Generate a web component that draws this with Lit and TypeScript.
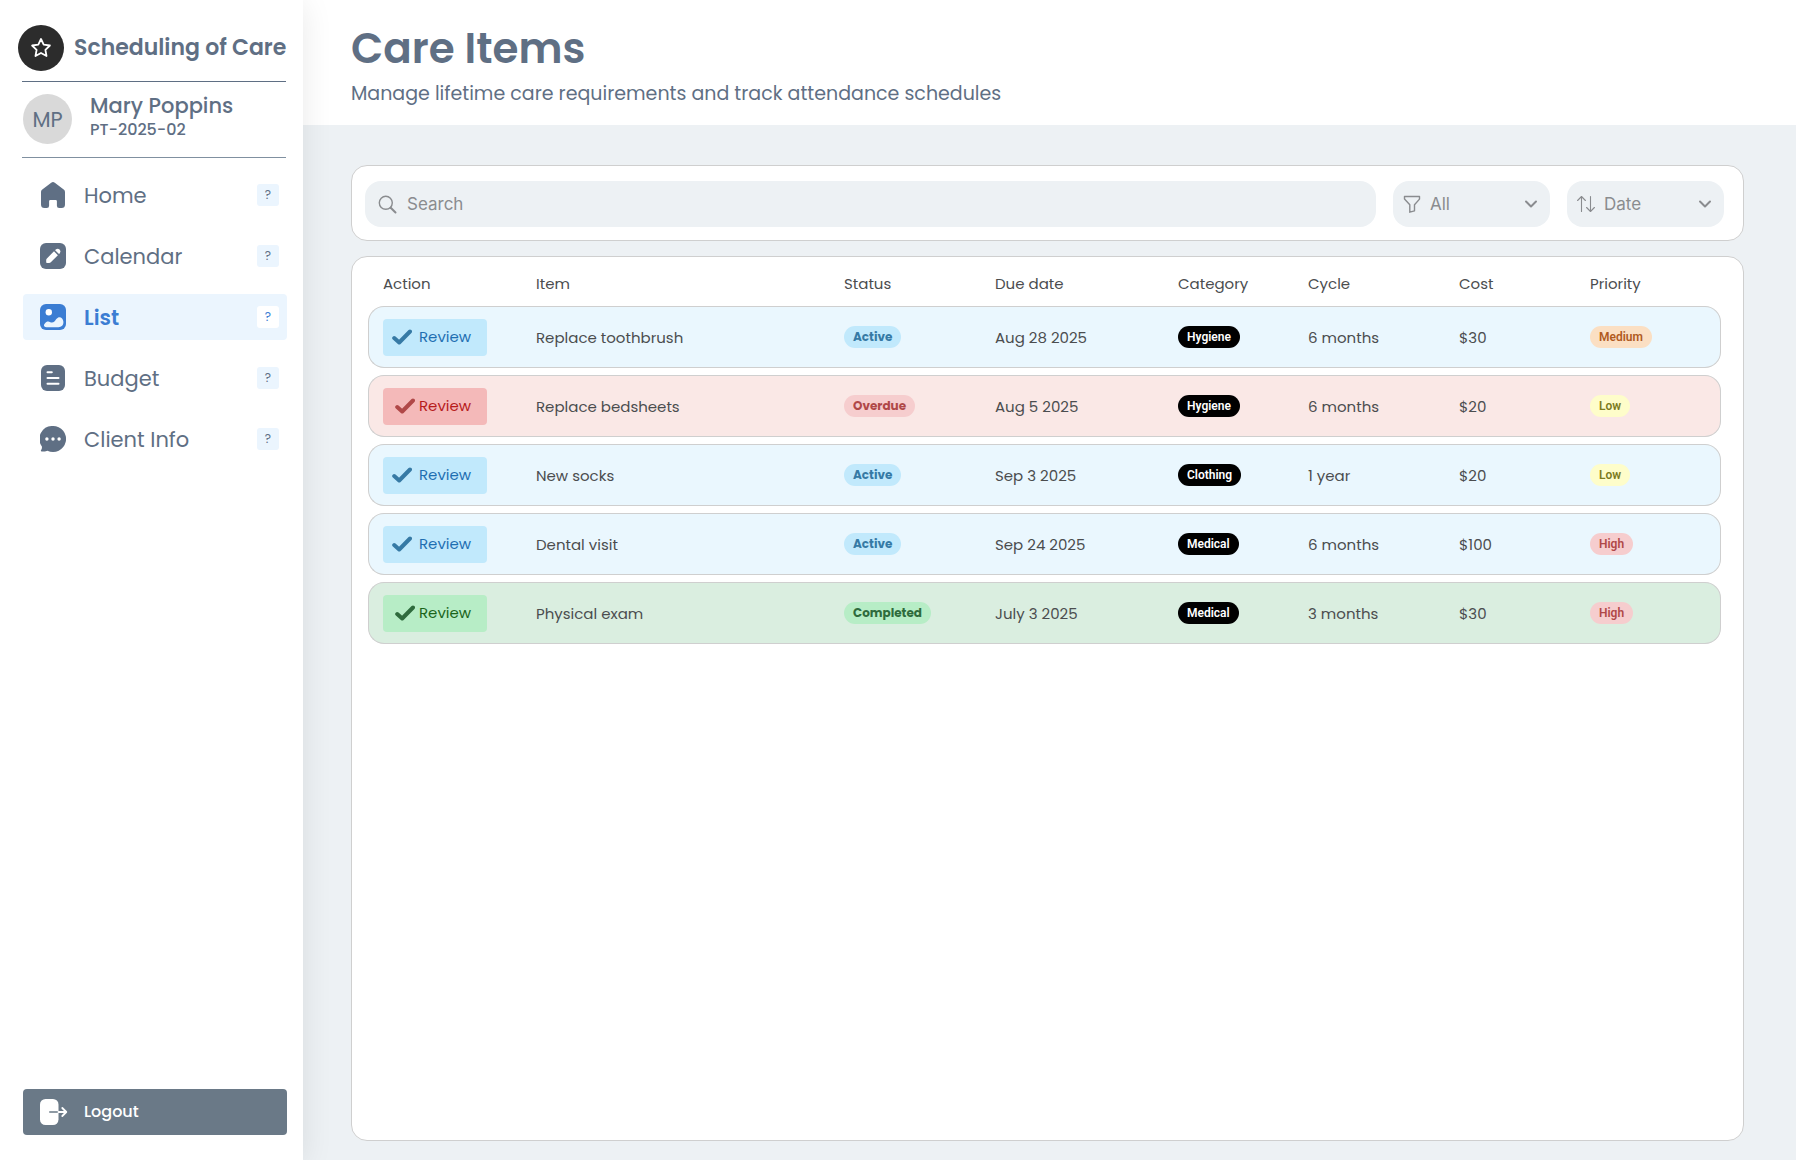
import { LitElement, html, css, svg } from "lit";
import { customElement, property } from "lit/decorators.js";
import { classMap } from "lit/directives/class-map.js";

type Tone = "active" | "overdue" | "completed";

interface CareItem {
  tone: Tone;
  status: string;
  name: string;
  due: string;
  category: string;
  cycle: string;
  cost: string;
  priority: "Low" | "Medium" | "High";
}

const CARE_ITEMS: CareItem[] = [
  { tone: "active", status: "Active", name: "Replace toothbrush", due: "Aug 28 2025", category: "Hygiene", cycle: "6 months", cost: "$30", priority: "Medium" },
  { tone: "overdue", status: "Overdue", name: "Replace bedsheets", due: "Aug 5 2025", category: "Hygiene", cycle: "6 months", cost: "$20", priority: "Low" },
  { tone: "active", status: "Active", name: "New socks", due: "Sep 3 2025", category: "Clothing", cycle: "1 year", cost: "$20", priority: "Low" },
  { tone: "active", status: "Active", name: "Dental visit", due: "Sep 24 2025", category: "Medical", cycle: "6 months", cost: "$100", priority: "High" },
  { tone: "completed", status: "Completed", name: "Physical exam", due: "July 3 2025", category: "Medical", cycle: "3 months", cost: "$30", priority: "High" },
];

const COLUMNS = ["Action", "Item", "Status", "Due date", "Category", "Cycle", "Cost", "Priority"];

const NAV_ICONS = {
  home: svg`<path fill="currentColor" d="M11.2.7a3 3 0 0 1 3.600 0l8.900 6.800a3.200 3.200 0 0 1 1.300 2.600v12.400a3.500 3.500 0 0 1-3.500 3.500h-2.300a2.300 2.300 0 0 1-2.300-2.300v-4.500a1.200 1.200 0 0 0-1.200-1.200h-5.400a1.200 1.200 0 0 0-1.200 1.200v4.500a2.300 2.300 0 0 1-2.300 2.300H4.500a3.500 3.500 0 0 1-3.500-3.500V10.100a3.200 3.200 0 0 1 1.300-2.600z"/>`,
  pencil: svg`<rect width="26" height="26" rx="6" fill="currentColor"/><path fill="#fff" d="M6.200 19.300v-2.200c0-.7.200-1.300.7-1.700l7.100-7.100 3.900 3.900-7.100 7.100c-.5.500-1 .7-1.700.7H6.900c-.4 0-.7-.3-.7-.7z"/><path fill="#fff" d="M15.100 7.200l.900-.900a2.800 2.800 0 0 1 3.900 3.900l-.9.900z"/>`,
  image: svg`<rect width="26" height="26" rx="6" fill="currentColor"/><circle cx="8.800" cy="8.300" r="3.200" fill="#fff"/><path fill="#ebf5fe" d="M4 20.800c.8-1.400 2-2.600 3.300-3.200.9-.4 1.800-.2 2.600.3 1.500.9 3.300.8 4.500-.5 1.300-1.400 2-3 3.500-3.700 2.600-1.200 5.300.8 5.500 4.100.2 3.300-1.900 5.400-5 5.400H6.500c-1.800 0-2.800-1.200-2.500-2.400z"/>`,
  document: svg`<rect x="1" width="24" height="26" rx="6" fill="currentColor"/><path d="M7.500 7.300h4.300M7.500 13h11M7.500 18.800h11" stroke="#fff" stroke-width="2" stroke-linecap="round"/>`,
  chat: svg`<path fill="currentColor" d="M13 0a13 13 0 1 1-5.600 24.700c-1.600.6-3.700 1-5.700.9-.8 0-1.100-.9-.6-1.500.7-.8 1-2.200.8-3.500A13 13 0 0 1 13 0z"/><g fill="#fff"><circle cx="6.900" cy="13" r="1.700"/><circle cx="13" cy="13" r="1.700"/><circle cx="19.100" cy="13" r="1.700"/></g>`,
};

const NAV: { label: string; icon: keyof typeof NAV_ICONS }[] = [
  { label: "Home", icon: "home" },
  { label: "Calendar", icon: "pencil" },
  { label: "List", icon: "image" },
  { label: "Budget", icon: "document" },
  { label: "Client Info", icon: "chat" },
];

@customElement("side-nav")
export class SideNav extends LitElement {
  @property() current = "List";

  static styles = css`
    :host {
      display: flex;
      flex-direction: column;
      flex: none;
      box-sizing: border-box;
      width: 303px;
      padding: 25px 16px 25px 18px;
      background: #fff;
      color: #5f6f84;
      box-shadow: 0 4px 30px rgba(0, 0, 0, 0.09);
      z-index: 1;
    }
    a { color: inherit; text-decoration: none; }
    svg { display: block; flex: none; }
    .brand { display: flex; align-items: center; gap: 10px; }
    .logo {
      display: grid;
      place-items: center;
      flex: none;
      width: 46px;
      height: 46px;
      border-radius: 50%;
      background: #2c2c2c;
    }
    .name {
      font-size: 22px;
      line-height: 32px;
      font-weight: 600;
      white-space: nowrap;
    }
    .user {
      display: flex;
      gap: 18px;
      margin: 10px 1px 14px 4px;
      padding: 12px 0 13px 1px;
      border-top: 1px solid #5f6f84;
      border-bottom: 1px solid #8090a0;
    }
    .avatar {
      display: grid;
      place-items: center;
      flex: none;
      width: 49px;
      height: 50px;
      border-radius: 50%;
      background: #d9d9d9;
      font-size: 21px;
    }
    .person { display: flex; flex-direction: column; }
    .person-name { font-size: 21px; line-height: 24px; font-weight: 500; }
    .person-id { font-size: 16px; line-height: 24px; font-weight: 500; }
    nav { display: flex; flex-direction: column; gap: 15px; margin-left: 5px; }
    .item {
      display: flex;
      align-items: center;
      gap: 18px;
      height: 46px;
      padding: 0 8px 0 17px;
      border-radius: 4px;
      font-size: 21px;
    }
    .label { flex: 1; }
    .help {
      width: 22px;
      height: 22px;
      padding: 0;
      border: 0;
      border-radius: 3px;
      background: #ebf5fe;
      color: inherit;
      font: 400 12px/22px "Poppins", "Inter", sans-serif;
    }
    .item.on { background: #ebf5fe; color: #3b7dd3; }
    .item.on .label { font-weight: 600; }
    .item.on .help { background: #fff; }
    .link { display: flex; align-items: center; gap: 18px; flex: 1; }
    .logout {
      display: flex;
      align-items: center;
      gap: 15px;
      height: 46px;
      margin: auto 0 0 5px;
      padding: 0 17px;
      border: 0;
      border-radius: 4px;
      background: #6a7987;
      color: #fff;
      font: 500 16px/24px "Poppins", "Inter", sans-serif;
    }
  `;

  render() {
    return html`
      <div class="brand">
        <span class="logo">
          <svg width="22" height="22" viewBox="0 0 22 22" fill="none" stroke="#fff" stroke-width="1.800" stroke-linejoin="round" aria-hidden="true">
            <path d="M11 2l2.700 5.700 6.200.8-4.500 4.300 1.100 6.200L11 16l-5.500 3 1.100-6.200L2.100 8.500l6.200-.8z" />
          </svg>
        </span>
        <span class="name">Scheduling of Care</span>
      </div>
      <div class="user">
        <span class="avatar">MP</span>
        <div class="person">
          <span class="person-name">Mary Poppins</span>
          <span class="person-id">PT-2025-02</span>
        </div>
      </div>
      <nav>
        ${NAV.map(
          ({ label, icon }) => html`
            <div class=${classMap({ item: true, on: label === this.current })}>
              <a class="link" href="#">
                <svg width="26" height="26" viewBox="0 0 26 26" aria-hidden="true">${NAV_ICONS[icon]}</svg>
                <span class="label">${label}</span>
              </a>
              <button class="help" type="button">?</button>
            </div>
          `
        )}
      </nav>
      <button class="logout" type="button">
        <svg width="29" height="26" viewBox="0 0 29 26" fill="none" aria-hidden="true">
          <rect width="18.500" height="26" rx="5.500" fill="#fff" />
          <path d="M9.800 13h9" stroke="#6a7987" stroke-width="1.600" stroke-linecap="round" />
          <path d="M18.500 13h7.500M22.300 9l4 4-4 4" stroke="#fff" stroke-width="1.800" stroke-linecap="round" stroke-linejoin="round" />
        </svg>
        Logout
      </button>
    `;
  }
}

@customElement("filter-bar")
export class FilterBar extends LitElement {
  static styles = css`
    :host {
      display: flex;
      gap: 17px;
      padding: 15px 19px 13px 13px;
      border: 1px solid #cfcfcf;
      border-radius: 16px;
      background: #fff;
    }
    svg { display: block; flex: none; }
    .field {
      display: flex;
      align-items: center;
      gap: 9px;
      box-sizing: border-box;
      height: 46px;
      padding: 0 12px 0 10px;
      border-radius: 16px;
      background: #edf1f4;
      color: #8a8c8f;
    }
    .search { flex: 1; gap: 10px; padding-left: 13px; }
    .pick { width: 157px; }
    input, select {
      flex: 1;
      min-width: 0;
      height: 46px;
      padding: 0;
      border: 0;
      outline: 0;
      background: none;
      color: inherit;
      font: 400 17px/24px "Inter", sans-serif;
      appearance: none;
    }
    input::placeholder { color: inherit; opacity: 1; }
    .chevron { pointer-events: none; }
  `;

  private chevron() {
    return html`<svg class="chevron" width="14" height="14" viewBox="0 0 14 14" fill="none" stroke="currentColor" stroke-width="2" stroke-linecap="round" stroke-linejoin="round" aria-hidden="true"><path d="M2 4.500l5 5 5-5" /></svg>`;
  }

  render() {
    return html`
      <label class="field search">
        <svg width="19" height="19" viewBox="0 0 19 19" fill="none" stroke="currentColor" stroke-width="1.400" stroke-linecap="round" aria-hidden="true">
          <circle cx="7.800" cy="7.800" r="6.500" />
          <path d="M12.700 12.700l4.800 4.800" stroke-width="2" />
        </svg>
        <input type="search" placeholder="Search" aria-label="Search" />
      </label>
      <label class="field pick">
        <svg width="18" height="18" viewBox="0 0 18 18" fill="none" stroke="currentColor" stroke-width="1.400" stroke-linejoin="round" aria-hidden="true">
          <path d="M1.500 1.500h15v2.600L11.500 9.800v6L6.800 17.200V9.800L1.500 4.100z" />
        </svg>
        <select aria-label="Filter"><option>All</option></select>
        ${this.chevron()}
      </label>
      <label class="field pick">
        <svg width="18" height="18" viewBox="0 0 18 18" fill="none" stroke="currentColor" stroke-width="1.100" stroke-linecap="round" stroke-linejoin="round" aria-hidden="true">
          <path d="M4.500 16.500V1.500M.6 5.500l3.900-4 3.900 4M13.500 1.500v15M9.600 12.500l3.900 4 3.900-4" />
        </svg>
        <select aria-label="Sort by"><option>Date</option></select>
        ${this.chevron()}
      </label>
    `;
  }
}

@customElement("care-table")
export class CareTable extends LitElement {
  @property({ attribute: false }) items: CareItem[] = [];

  static styles = css`
    :host {
      display: block;
      flex: 1;
      padding: 0 22px 16px 16px;
      border: 1px solid #cfcfcf;
      border-radius: 16px;
      background: #fff;
      color: #4b4d4f;
    }
    table {
      width: 100%;
      border-collapse: separate;
      border-spacing: 0 7px;
      table-layout: fixed;
      font-size: 15px;
      line-height: 24px;
    }
    th, td { box-sizing: border-box; padding: 0; text-align: left; font-weight: 400; }
    th { height: 35px; padding-top: 4px; }
    th:first-child { padding-left: 15px; }
    td {
      height: 62px;
      border: 0 solid #cfcfcf;
      border-width: 1px 0;
    }
    td:first-child { padding-left: 14px; border-left-width: 1px; border-radius: 16px 0 0 16px; }
    td:last-child { border-right-width: 1px; border-radius: 0 16px 16px 0; }
    .col-action { width: 168px; }
    .col-item { width: 308px; }
    .col-status, .col-cycle { width: 151px; }
    .col-due { width: 183px; }
    .col-category { width: 130px; }
    .col-cost, .col-priority { width: 131px; }

    .row.active td { background: #eaf7fe; }
    .row.overdue td { background: #fae8e6; }
    .row.completed td { background: #daeee0; }

    .review {
      display: flex;
      align-items: center;
      gap: 4px;
      width: 104px;
      height: 37px;
      padding: 0 0 0 12px;
      border: 0;
      border-radius: 4px;
      font: 400 15px/24px "Poppins", "Inter", sans-serif;
    }
    .review svg { flex: none; }
    .active .review { gap: 7px; padding-left: 9px; background: #c1e9fc; color: #1f6fb2; }
    .overdue .review { background: #f4b9b9; color: #b71c1c; }
    .completed .review { background: #b7edc6; color: #1b651b; }
    .active .check { color: #367aa5; }
    .overdue .check { color: #b04848; }
    .completed .check { color: #2f6b3d; }

    .text { padding-top: 1px; }

    .badge {
      display: block;
      width: fit-content;
      padding: 0 9px;
      border-radius: 11px;
      font: 700 12px/22px "Poppins", "Inter", sans-serif;
    }
    .tag { font-family: "Roboto", sans-serif; font-weight: 600; }
    .badge.active { background: #c1e9fc; color: #367aa5; }
    .badge.overdue { background: #f6cdce; color: #b04848; }
    .badge.completed { background: #b7edc6; color: #2f6b3d; }
    .category { background: #000; color: #fff; }
    .low { background: #fefdca; color: #7c7c1e; }
    .medium { background: #fbdfc3; color: #b05a1e; }
    .high { background: #f6cdce; color: #b04848; }
  `;

  render() {
    return html`
      <table>
        <colgroup>
          <col class="col-action" /><col class="col-item" /><col class="col-status" /><col class="col-due" />
          <col class="col-category" /><col class="col-cycle" /><col class="col-cost" /><col class="col-priority" />
        </colgroup>
        <thead>
          <tr>${COLUMNS.map((c) => html`<th scope="col">${c}</th>`)}</tr>
        </thead>
        <tbody>
          ${this.items.map(
            (item) => html`
              <tr class="row ${item.tone}">
                <td>
                  <button class="review" type="button">
                    <svg class="check" width="20" height="16" viewBox="0 0 20 16" fill="none" stroke="currentColor" stroke-width="4" stroke-linecap="round" stroke-linejoin="round" aria-hidden="true"><path d="M2.200 9l5 4.500L18 2.500" /></svg>
                    Review
                  </button>
                </td>
                <td class="text">${item.name}</td>
                <td><span class="badge ${item.tone}">${item.status}</span></td>
                <td class="text">${item.due}</td>
                <td><span class="badge tag category">${item.category}</span></td>
                <td class="text">${item.cycle}</td>
                <td class="text">${item.cost}</td>
                <td><span class="badge tag ${item.priority.toLowerCase()}">${item.priority}</span></td>
              </tr>
            `
          )}
        </tbody>
      </table>
    `;
  }
}

@customElement("app-root")
export class AppRoot extends LitElement {
  static styles = css`
    :host {
      display: flex;
      min-height: 100vh;
      background: #edf1f4;
      font-family: "Poppins", "Inter", sans-serif;
    }
    .main { display: flex; flex-direction: column; flex: 1; min-width: 0; }
    .head { padding: 24px 52px 17px 48px; background: #fff; color: #5f6f84; }
    h1 { margin: 0; font-size: 42px; line-height: 50px; font-weight: 600; }
    p { margin: 6px 0 0; font-size: 19px; line-height: 28px; }
    .body {
      display: flex;
      flex-direction: column;
      flex: 1;
      gap: 15px;
      padding: 40px 52px 19px 48px;
    }
  `;

  render() {
    return html`
      <side-nav current="List"></side-nav>
      <div class="main">
        <header class="head">
          <h1>Care Items</h1>
          <p>Manage lifetime care requirements and track attendance schedules</p>
        </header>
        <main class="body">
          <filter-bar></filter-bar>
          <care-table .items=${CARE_ITEMS}></care-table>
        </main>
      </div>
    `;
  }
}
